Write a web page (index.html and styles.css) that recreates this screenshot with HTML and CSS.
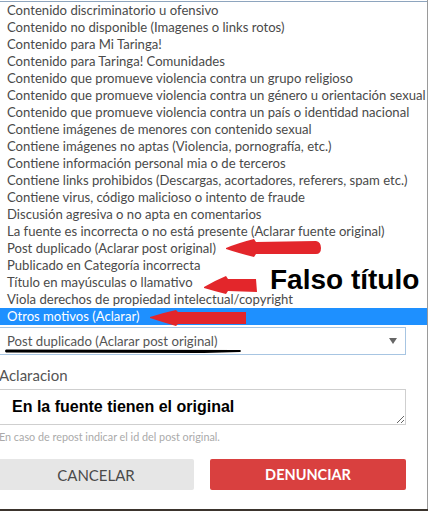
FILE: index.html
```html
<!DOCTYPE html>
<html lang="es">
<head>
<meta charset="utf-8">
<title>Denunciar</title>
<link rel="stylesheet" href="styles.css">
</head>
<body>
<div class="modal">
  <ul class="options">
    <li>Contenido discriminatorio u ofensivo</li>
    <li>Contenido no disponible (Imagenes o links rotos)</li>
    <li>Contenido para Mi Taringa!</li>
    <li>Contenido para Taringa! Comunidades</li>
    <li>Contenido que promueve violencia contra un grupo religioso</li>
    <li>Contenido que promueve violencia contra un género u orientación sexual</li>
    <li>Contenido que promueve violencia contra un país o identidad nacional</li>
    <li>Contiene imágenes de menores con contenido sexual</li>
    <li>Contiene imágenes no aptas (Violencia, pornografía, etc.)</li>
    <li>Contiene información personal mia o de terceros</li>
    <li>Contiene links prohibidos (Descargas, acortadores, referers, spam etc.)</li>
    <li>Contiene virus, código malicioso o intento de fraude</li>
    <li>Discusión agresiva o no apta en comentarios</li>
    <li>La fuente es incorrecta o no está presente (Aclarar fuente original)</li>
    <li>Post duplicado (Aclarar post original)</li>
    <li>Publicado en Categoría incorrecta</li>
    <li>Título en mayúsculas o llamativo</li>
    <li>Viola derechos de propiedad intelectual/copyright</li>
    <li class="selected">Otros motivos (Aclarar)</li>
  </ul>
  <div class="form">
    <div class="select">
      <span>Post duplicado (Aclarar post original)</span>
      <svg class="caret" width="8" height="6" viewBox="0 0 8 6"><path d="M0 0H8L4 6Z" fill="#666"/></svg>
    </div>
    <label class="label">Aclaracion</label>
    <textarea class="note">En la fuente tienen el original</textarea>
    <p class="help">En caso de repost indicar el id del post original.</p>
    <div class="buttons">
      <button class="btn cancel">CANCELAR</button>
      <button class="btn report">DENUNCIAR</button>
    </div>
  </div>

  <svg class="mark arrow1" width="96" height="19" viewBox="0 0 96 19"><path d="M0 9 Q12 4 28 0 L30 3 L90 2 Q95 3 95 9 Q95 15 90 15 L30 15 L28 18 Q12 14 0 10 Z" fill="#e3262b"/></svg>
  <svg class="mark arrow2" width="54" height="19" viewBox="0 0 54 19"><path d="M0 11 Q10 5 22 0 L24 3 L52 3 L53 16 L24 15 L22 18 Q10 15 0 12 Z" fill="#e3262b"/></svg>
  <svg class="mark arrow3" width="98" height="16" viewBox="0 0 98 16"><path d="M0 7 Q12 3 26 0 L28 2 L96 2 L96 14 L28 14 L26 16 Q12 12 0 8 Z" fill="#e3262b"/></svg>
  <svg class="mark underline" width="240" height="6" viewBox="0 0 240 6"><path d="M2 1.5 Q0 3 2 4.5 L200 5 L236 4 Q238 3 236 2 Z" fill="#000"/></svg>
  <div class="mark callout">Falso título</div>
</div>
</body>
</html>
```

FILE: styles.css
```css
html, body {
  margin: 0;
  padding: 0;
}
body {
  width: 428px;
  height: 511px;
  overflow: hidden;
  background: #3b342d;
  font-family: Lato, "Open Sans", sans-serif;
}
.modal {
  position: relative;
  width: 427px;
  height: 509px;
  background: #fff;
  border-right: 1px solid #9a9a9a;
  overflow: hidden;
}
.options {
  list-style: none;
  margin: 1px 0 0 0;
  padding: 0;
  border-top: 1px solid #8ea5be;
  width: 427px;
}
.options li {
  height: 17px;
  line-height: 17px;
  padding-left: 7px;
  font-size: 13.1px;
  color: #4a4a4a;
  white-space: nowrap;
}
.options li.selected {
  background: #1e90ff;
  color: #fff;
}
.form {
  margin-left: -2px;
  width: 408px;
  padding-top: 2px;
}
.select {
  box-sizing: border-box;
  height: 28px;
  border: 1px solid #a7c5e2;
  display: flex;
  align-items: center;
  justify-content: space-between;
  padding: 0 8px 0 8px;
  font-size: 13.2px;
  color: #555;
}
.caret {
  display: block;
}
.label {
  display: block;
  margin-top: 12px;
  line-height: 17px;
  font-size: 15px;
  color: #555;
  padding-left: 1px;
}
.note {
  display: block;
  box-sizing: border-box;
  width: 408px;
  height: 36px;
  margin-top: 5px;
  border: 1px solid #cfcfcf;
  padding: 8px 13px;
  font-family: "Liberation Sans", Arial, sans-serif;
  font-weight: bold;
  font-size: 16px;
  line-height: 18px;
  color: #000;
  resize: vertical;
  outline: none;
}
.help {
  margin: 5px 0 0 0;
  line-height: 14px;
  font-size: 10.8px;
  color: #aaa;
  padding-left: 1px;
}
.buttons {
  display: flex;
  gap: 16px;
  margin-top: 15px;
}
.btn {
  flex: 1;
  height: 31px;
  border: 0;
  border-radius: 2px;
  font-family: Lato, sans-serif;
  font-size: 15px;
  padding: 0;
}
.cancel {
  background: #e6e6e6;
  color: #4a4a4a;
}
.report {
  background: #d9403f;
  color: #fff;
  font-weight: bold;
  font-size: 14.5px;
}
.mark {
  position: absolute;
}
.arrow1 { left: 226px; top: 239px; }
.arrow2 { left: 204px; top: 276px; }
.arrow3 { left: 150px; top: 310px; }
.underline { left: 4px; top: 348px; }
.callout {
  left: 270px;
  top: 264px;
  font-family: "Liberation Sans", Arial, sans-serif;
  font-weight: bold;
  font-size: 28px;
  line-height: 32px;
  color: #000;
}
```
